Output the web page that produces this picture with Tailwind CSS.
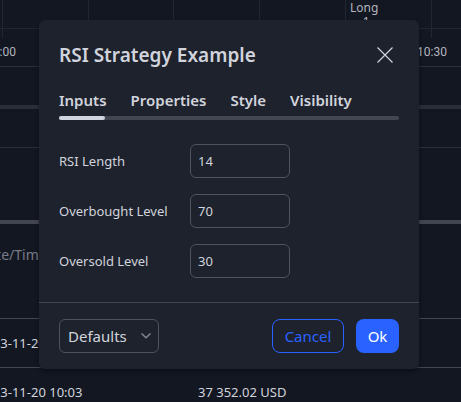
<!DOCTYPE html>
<html lang="en">
<head>
<meta charset="utf-8">
<meta name="viewport" content="width=device-width, initial-scale=1">
<title>RSI Strategy Example</title>
<script src="https://cdn.jsdelivr.net/npm/@tailwindcss/browser@4"></script>
</head>
<body class="relative min-h-screen overflow-hidden bg-[#131722] font-['Trebuchet_MS','Noto_Sans',sans-serif] text-[#d1d4dc]">
<main class="h-screen overflow-hidden">
  <section aria-label="Chart" class="relative h-[67px] border-b border-[#2a2e39]">
    <svg class="block h-[38px] w-full" aria-hidden="true">
      <path d="M2.5 0V38M88.5 0V38M173.5 0V38M259.5 0V38M345.5 0V38M431.5 0V38M0 28.5H4000" stroke="#222631" fill="none"/>
    </svg>
    <div class="absolute top-0 left-[350px] text-center text-xs leading-4 text-[#b2b5be]"><span class="block">Long</span><span class="block pl-1 leading-3">1</span></div>
    <div class="-ml-3.5 flex h-[28px] items-center justify-between pr-3.5 font-['Roboto',sans-serif] text-xs text-[#b2b5be]"><span>10:00</span><span>10:30</span></div>
  </section>
  <div class="mt-[38px] h-1 bg-[#2a2e39]"></div>
  <div class="h-[39px] border-b border-[#2a2e39]"></div>
  <div class="mt-[72px] h-1 bg-[#434651]"></div>
  <table class="-ml-[22px] w-[calc(100%+22px)] table-fixed text-[13px] leading-5">
    <thead>
      <tr class="h-[94px] border-b border-[#434651] text-left text-sm text-[#787b86]"><th class="w-[220px] pb-8 font-normal">Date/Time</th><th class="pb-8 font-normal">Price</th></tr>
    </thead>
    <tbody>
      <tr class="h-[49px] border-b border-[#434651]"><td>2023-11-20 10:17</td><td>37 352.02 USD</td></tr>
      <tr class="h-[49px]"><td>2023-11-20 10:03</td><td>37 352.02 USD</td></tr>
    </tbody>
  </table>
</main>

<div class="absolute inset-x-0 top-0 pt-5 pr-[42px] pl-[39px]">
  <form role="dialog" aria-labelledby="title" class="rounded-md bg-[#1e222d] shadow-[0_2px_4px_rgba(0,0,0,0.4)]">
    <header class="flex h-[70px] items-center justify-between px-5">
      <h1 id="title" class="text-[19px] leading-7 font-semibold">RSI Strategy Example</h1>
      <button type="button" aria-label="Close" class="p-1.5">
        <svg class="block size-4" viewBox="0 0 16 16" fill="none" stroke="currentColor" stroke-width="1.2"><path d="M.5.5l15 15M15.5.5l-15 15"/></svg>
      </button>
    </header>
    <div class="px-5">
      <div role="tablist" class="flex h-[26px] items-start gap-6 text-[15px] leading-5 font-semibold">
        <button type="button" role="tab" aria-selected="true">Inputs</button>
        <button type="button" role="tab" aria-selected="false">Properties</button>
        <button type="button" role="tab" aria-selected="false">Style</button>
        <button type="button" role="tab" aria-selected="false">Visibility</button>
      </div>
      <div class="h-1 rounded-full bg-[#434651]"><div class="h-1 w-[46px] rounded-full bg-[#d1d4dc]"></div></div>
    </div>
    <div class="grid grid-cols-[131px_100px] items-center gap-y-4 px-5 py-6 text-[13px] leading-5">
      <label for="length">RSI Length</label>
      <input id="length" value="14" class="h-[34px] w-full rounded-md border border-[#50535e] px-[7px]">
      <label for="overbought">Overbought Level</label>
      <input id="overbought" value="70" class="h-[34px] w-full rounded-md border border-[#50535e] px-[7px]">
      <label for="oversold">Oversold Level</label>
      <input id="oversold" value="30" class="h-[34px] w-full rounded-md border border-[#50535e] px-[7px]">
    </div>
    <footer class="flex items-center gap-3 border-t border-[#434651] px-5 py-4 text-[15px] leading-6">
      <div class="relative mr-auto">
        <select aria-label="Defaults" class="h-[34px] w-[100px] appearance-none rounded-md border border-[#50535e] pl-2"><option>Defaults</option></select>
        <svg class="pointer-events-none absolute top-[14px] right-2 h-[6px] w-[10px]" viewBox="0 0 10 6" fill="none" stroke="#868993" stroke-width="1.4"><path d="M.5.5L5 4.8 9.500.5"/></svg>
      </div>
      <button type="button" class="h-[34px] w-[72px] rounded-lg border border-[#2962ff] text-[#2962ff]">Cancel</button>
      <button type="submit" class="h-[34px] w-[43px] rounded-lg bg-[#2962ff] text-white">Ok</button>
    </footer>
  </form>
</div>
</body>
</html>
